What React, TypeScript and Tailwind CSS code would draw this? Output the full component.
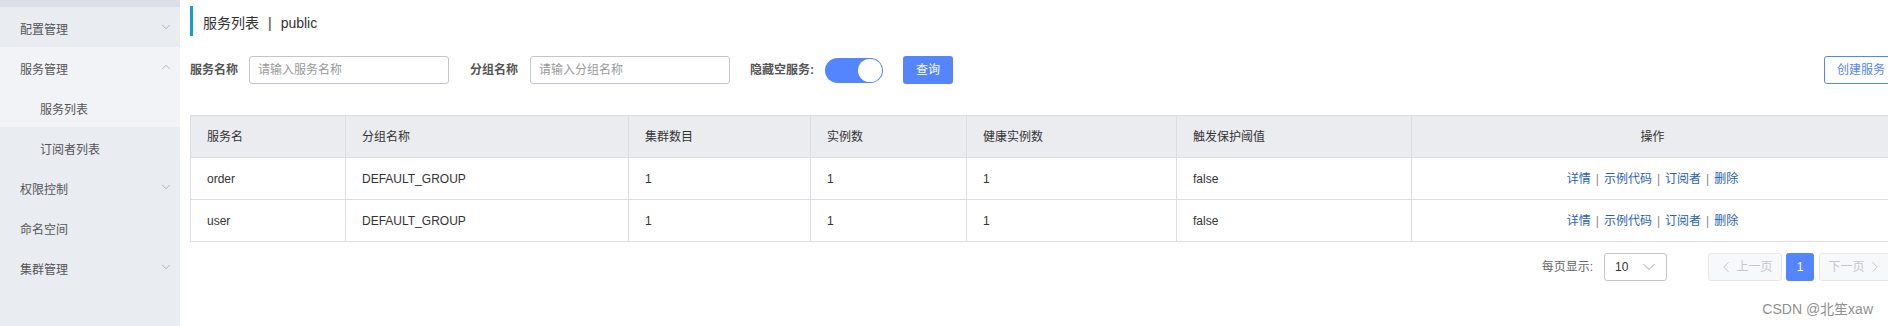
import { ChevronDown, ChevronUp, ChevronLeft, ChevronRight } from "lucide-react";

const menu = [
  { label: "配置管理", arrow: "down", level: 1, bg: "bg-[#e9ecf1]" },
  { label: "服务管理", arrow: "up", level: 1, bg: "bg-[#f2f3f7]" },
  { label: "服务列表", arrow: "", level: 2, bg: "bg-[#f2f3f7]" },
  { label: "订阅者列表", arrow: "", level: 2, bg: "bg-[#e9ecf1]" },
  { label: "权限控制", arrow: "down", level: 1, bg: "bg-[#e9ecf1]" },
  { label: "命名空间", arrow: "", level: 1, bg: "bg-[#e9ecf1]" },
  { label: "集群管理", arrow: "down", level: 1, bg: "bg-[#e9ecf1]" },
];

const columns = [
  { title: "服务名", width: "w-[155px]" },
  { title: "分组名称", width: "w-[283px]" },
  { title: "集群数目", width: "w-[182px]" },
  { title: "实例数", width: "w-[156px]" },
  { title: "健康实例数", width: "w-[210px]" },
  { title: "触发保护阈值", width: "w-[235px]" },
  { title: "操作", width: "w-[482px]" },
];

const rows = [
  { name: "order", group: "DEFAULT_GROUP", clusters: 1, instances: 1, healthy: 1, threshold: "false" },
  { name: "user", group: "DEFAULT_GROUP", clusters: 1, instances: 1, healthy: 1, threshold: "false" },
];

const actions = ["详情", "示例代码", "订阅者", "删除"];

function Sidebar() {
  return (
    <aside className="w-[180px] shrink-0 bg-[#e9ecf1] flex flex-col">
      <div className="h-[7px] bg-[#dcdfe6]" />
      {menu.map((item) => (
        <div
          key={item.label}
          className={`h-[40px] flex items-center justify-between pr-[7px] ${item.bg} ${
            item.level === 2 ? "pl-[40px]" : "pl-[20px]"
          }`}
        >
          <span className="text-[12px] text-[#555] mt-[6px]">{item.label}</span>
          {item.arrow === "down" && <ChevronDown size={14} strokeWidth={1.2} className="text-[#999]" />}
          {item.arrow === "up" && <ChevronUp size={14} strokeWidth={1.2} className="text-[#999]" />}
        </div>
      ))}
    </aside>
  );
}

function Filters() {
  return (
    <div className="flex items-center h-[28px] mt-[20px]">
      <span className="text-[12px] font-bold text-[#555]">服务名称</span>
      <input
        className="ml-[11px] w-[200px] h-[28px] border border-[#c4c6cf] rounded-[3px] px-[8px] text-[12px] outline-none placeholder:text-[#999]"
        placeholder="请输入服务名称"
      />
      <span className="ml-[21px] text-[12px] font-bold text-[#555]">分组名称</span>
      <input
        className="ml-[12px] w-[200px] h-[28px] border border-[#c4c6cf] rounded-[3px] px-[8px] text-[12px] outline-none placeholder:text-[#999]"
        placeholder="请输入分组名称"
      />
      <span className="ml-[20px] text-[12px] font-bold text-[#555]">隐藏空服务:</span>
      <div className="ml-[11px] w-[58px] h-[25px] rounded-full bg-[#5584ff] flex items-center justify-end pr-[1px]">
        <div className="w-[24px] h-[23px] rounded-full bg-white" />
      </div>
      <button className="ml-[20px] w-[50px] h-[28px] rounded-[3px] bg-[#5584ff] text-white text-[12px]">查询</button>
      <button className="ml-auto mr-[-5px] w-[74px] h-[28px] rounded-[3px] border border-[#5584ff] text-[#5584ff] text-[12px] bg-white">
        创建服务
      </button>
    </div>
  );
}

function ServiceTable() {
  return (
    <table className="mt-[31px] w-[1703px] table-fixed border-collapse text-[12px] text-[#333]">
      <thead>
        <tr className="h-[42px] bg-[#ebecf0]">
          {columns.map((c, i) => (
            <th
              key={c.title}
              className={`${c.width} border border-[#dcdee3] font-normal px-[16px] ${
                i === columns.length - 1 ? "text-center" : "text-left"
              }`}
            >
              {c.title}
            </th>
          ))}
        </tr>
      </thead>
      <tbody>
        {rows.map((r) => (
          <tr key={r.name} className="h-[42px]">
            <td className="border border-[#dcdee3] px-[16px]">{r.name}</td>
            <td className="border border-[#dcdee3] px-[16px]">{r.group}</td>
            <td className="border border-[#dcdee3] px-[16px]">{r.clusters}</td>
            <td className="border border-[#dcdee3] px-[16px]">{r.instances}</td>
            <td className="border border-[#dcdee3] px-[16px]">{r.healthy}</td>
            <td className="border border-[#dcdee3] px-[16px]">{r.threshold}</td>
            <td className="border border-[#dcdee3] px-[16px] text-center">
              {actions.map((a, i) => (
                <span key={a}>
                  {i > 0 && <span className="mx-[5px] text-[#888]">|</span>}
                  <a className="text-[#2a5fb5] cursor-pointer">{a}</a>
                </span>
              ))}
            </td>
          </tr>
        ))}
      </tbody>
    </table>
  );
}

function Pagination() {
  return (
    <div className="flex items-center justify-end mt-[11px] w-[1703px] text-[12px]">
      <span className="text-[#666]">每页显示:</span>
      <div className="ml-[11px] w-[63px] h-[28px] border border-[#c4c6cf] rounded-[3px] flex items-center justify-between pl-[10px] pr-[7px]">
        <span className="text-[#333]">10</span>
        <ChevronDown size={20} strokeWidth={1.1} className="text-[#999]" />
      </div>
      <button className="ml-[41px] w-[74px] h-[28px] rounded-[3px] border border-[#e6e7eb] bg-[#f7f8fa] text-[#c4c6cf] flex items-center justify-center gap-[1px]">
        <ChevronLeft size={18} strokeWidth={1.3} />
        上一页
      </button>
      <button className="ml-[4px] w-[28px] h-[28px] rounded-[3px] bg-[#5584ff] text-white">1</button>
      <button className="ml-[5px] w-[74px] h-[28px] rounded-[3px] border border-[#e6e7eb] bg-[#f7f8fa] text-[#c4c6cf] flex items-center justify-center gap-[1px]">
        下一页
        <ChevronRight size={18} strokeWidth={1.3} />
      </button>
    </div>
  );
}

export default function App() {
  return (
    <div
      className="relative w-[1888px] h-[326px] overflow-hidden flex bg-white"
      style={{ fontFamily: '"Liberation Sans", "Noto Sans CJK SC", sans-serif' }}
    >
      <Sidebar />
      <main className="flex-1 min-w-0 pl-[10px] pt-[6px]">
        <div className="flex items-center h-[30px] border-l-[3px] border-[#1a9bd7] pl-[10px] pt-[5px] text-[14px] text-[#333]">
          <span>服务列表</span>
          <span className="mx-[9px]">|</span>
          <span>public</span>
        </div>
        <div className="w-[1703px]">
          <Filters />
        </div>
        <ServiceTable />
        <Pagination />
      </main>
      <div className="absolute right-[15px] bottom-[6px] text-[14px] text-[#8f8f8f]">CSDN @北笙xaw</div>
    </div>
  );
}
